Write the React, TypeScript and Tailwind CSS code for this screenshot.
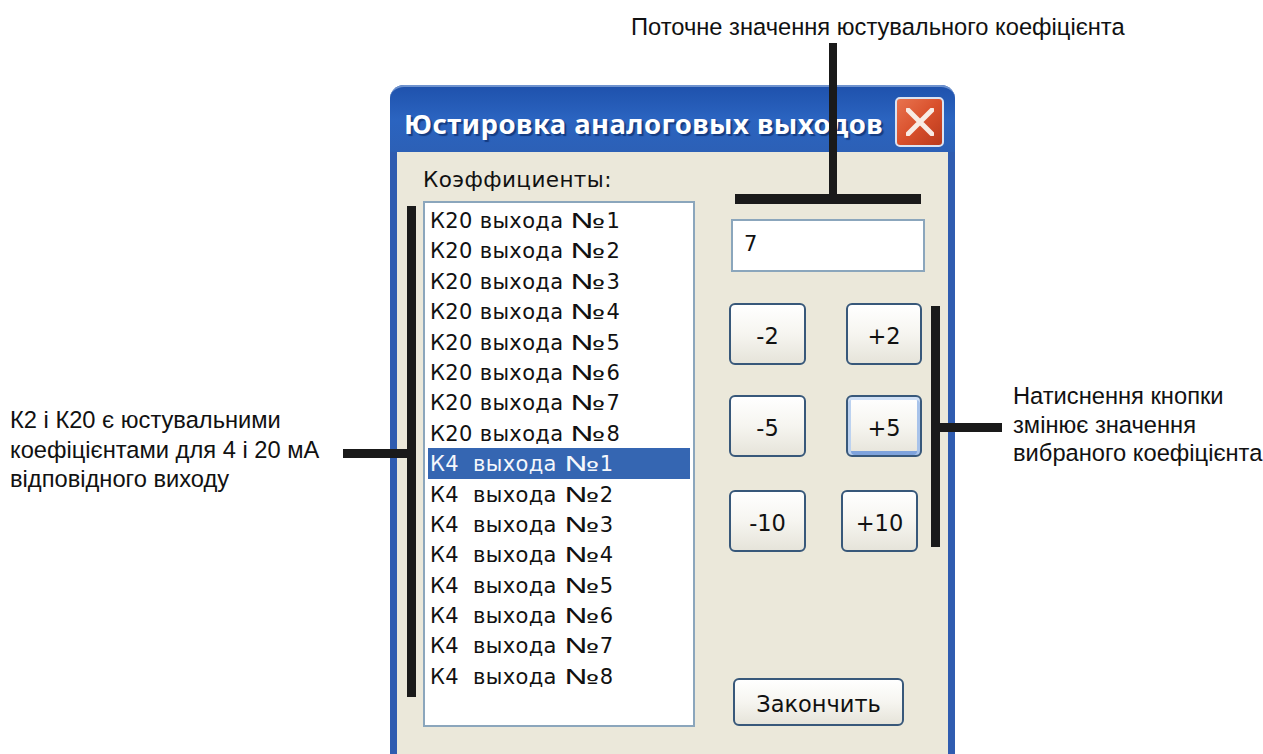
const outputs = [
  { id: "К20", n: 1 },
  { id: "К20", n: 2 },
  { id: "К20", n: 3 },
  { id: "К20", n: 4 },
  { id: "К20", n: 5 },
  { id: "К20", n: 6 },
  { id: "К20", n: 7 },
  { id: "К20", n: 8 },
  { id: "К4 ", n: 1 },
  { id: "К4 ", n: 2 },
  { id: "К4 ", n: 3 },
  { id: "К4 ", n: 4 },
  { id: "К4 ", n: 5 },
  { id: "К4 ", n: 6 },
  { id: "К4 ", n: 7 },
  { id: "К4 ", n: 8 },
];

function XpButton({ label, className, focused }: { label: string; className: string; focused?: boolean }) {
  return (
    <button
      className={`flex items-center justify-center rounded-[6px] border-2 border-[#38587a] bg-gradient-to-b from-white via-[#f6f5f0] to-[#e6e4da] pt-[4px] text-[22.5px] leading-none text-[#111] ${
        focused ? "shadow-[inset_0_3px_0_#cfdff5,inset_3px_0_0_#bcd2f0,inset_-3px_0_0_#a8c3ea,inset_0_-4px_0_#7fa3dc]" : ""
      } ${className}`}
    >
      {label}
    </button>
  );
}

export default function App() {
  return (
    <div className="relative h-[754px] w-[1263px] overflow-hidden bg-white font-['Liberation_Sans',sans-serif] text-[23.7px] text-[#111]">
      <p className="absolute left-[631px] top-[13px] whitespace-nowrap leading-[28px]">
        Поточне значення юстувального коефіцієнта
      </p>

      <div className="flex items-start pt-[85px]">
        <div className="w-[390px] shrink-0 whitespace-nowrap pl-[10px] pt-[321px] leading-[29.5px]">
          <p>К2 і К20 є юстувальними</p>
          <p>коефіцієнтами для 4 і 20 мА</p>
          <p>відповідного виходу</p>
        </div>

        {/* dialog window, cut off by the bottom of the page */}
        <section className="h-[700px] w-[565px] shrink-0 rounded-t-[14px] bg-[#2f5cb0] px-[7px] font-['DejaVu_Sans',sans-serif] text-[21px]">
          <header className="-mx-[7px] flex h-[67px] items-start justify-between rounded-t-[14px] border-t-2 border-[#6f93cf] bg-gradient-to-b from-[#1f52ad] via-[#2b64c0] to-[#2c60b6] pl-[14px] pr-[11px] pt-[10px]">
            <h1 className="mt-[9px] whitespace-nowrap font-['Noto_Sans',sans-serif] text-[27.5px] font-bold leading-[36px] tracking-[0.45px] text-white [text-shadow:2px_2px_1px_#153c82]">
              Юстировка аналоговых выходов
            </h1>
            <div className="flex h-[50px] w-[49px] shrink-0 items-center justify-center rounded-[5px] border-2 border-[#dbe3f2] bg-gradient-to-br from-[#e8734e] via-[#d9502c] to-[#b93a1d]">
              <svg viewBox="0 0 28 28" className="h-[28px] w-[28px]">
                <path d="M2 2 L26 26 M26 2 L2 26" stroke="#f8ebe4" strokeWidth="5" strokeLinecap="round" fill="none" />
              </svg>
            </div>
          </header>

          <div className="flex h-[633px] items-start bg-[#ebe8da] pl-[26px]">
            <div className="w-[272px] shrink-0 pt-[15px]">
              <div className="h-[34px] text-[21.5px] leading-[26px] tracking-[0.4px]">Коэффициенты:</div>
              <ul className="h-[526px] border-2 border-[#8ba6bc] bg-white px-[3px] pt-[2px] tracking-[0.35px]">
                {outputs.map((row, i) => (
                  <li
                    key={row.id + row.n}
                    className={`h-[30.4px] whitespace-pre pl-[2px] leading-[30px] ${
                      i === 8 ? "bg-[#3566b2] text-[#f4f7fc]" : ""
                    }`}
                  >
                    {row.id} выхода{" "}
                    <span className="inline-block w-[36px] origin-left scale-x-[1.65] font-['Noto_Sans',sans-serif]">№</span>
                    {row.n}
                  </li>
                ))}
              </ul>
            </div>

            <div className="ml-[34px] flex flex-col items-start pt-[67px]">
              <div className="ml-[2px] h-[53px] w-[194px] border-2 border-[#8ba6bc] bg-white pl-[11px] leading-[46px]">7</div>

              <div className="mt-[31px] flex gap-[40px]">
                <XpButton label="-2" className="h-[62px] w-[77px]" />
                <XpButton label="+2" className="h-[62px] w-[76px]" />
              </div>
              <div className="mt-[30px] flex gap-[40px]">
                <XpButton label="-5" className="h-[62px] w-[77px]" />
                <XpButton label="+5" className="h-[62px] w-[76px]" focused />
              </div>
              <div className="mt-[33px] flex gap-[35px]">
                <XpButton label="-10" className="h-[62px] w-[77px]" />
                <XpButton label="+10" className="h-[62px] w-[77px]" />
              </div>

              <XpButton label="Закончить" className="ml-[4px] mt-[126px] h-[48px] w-[171px]" />
            </div>
          </div>
        </section>

        <div className="shrink-0 whitespace-nowrap pl-[58px] pt-[297px] leading-[28.5px]">
          <p>Натиснення кнопки</p>
          <p>змінює значення</p>
          <p>вибраного коефіцієнта</p>
        </div>
      </div>

      {/* callout lines drawn over the dialog */}
      <div className="absolute left-[829px] top-[43px] h-[155px] w-[8px] bg-[#1a1a1a]" />
      <div className="absolute left-[735px] top-[194px] h-[10px] w-[186px] bg-[#1a1a1a]" />
      <div className="absolute left-[407px] top-[206px] h-[491px] w-[9px] bg-[#1a1a1a]" />
      <div className="absolute left-[343px] top-[449px] h-[9px] w-[67px] bg-[#1a1a1a]" />
      <div className="absolute left-[931px] top-[306px] h-[241px] w-[9px] bg-[#1a1a1a]" />
      <div className="absolute left-[938px] top-[423px] h-[9px] w-[64px] bg-[#1a1a1a]" />
    </div>
  );
}
